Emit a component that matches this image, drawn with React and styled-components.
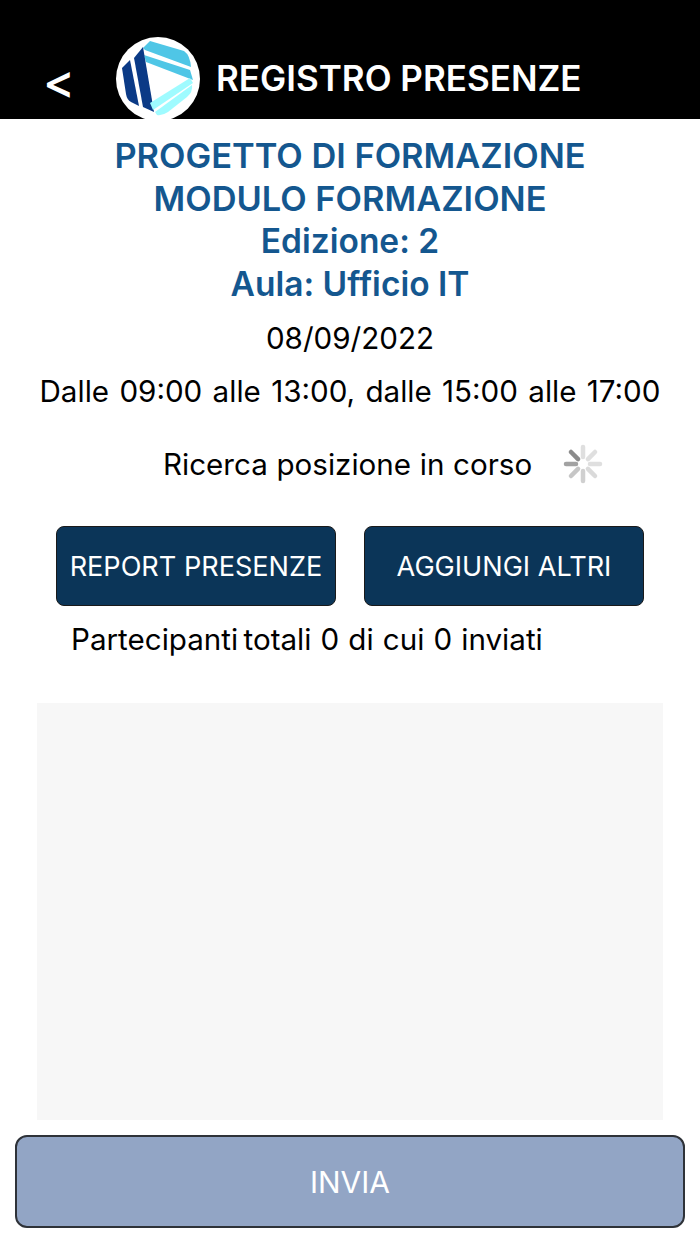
import styled, { createGlobalStyle } from 'styled-components';

const GlobalStyle = createGlobalStyle`
  html, body {
    margin: 0;
    padding: 0;
    background: #fff;
    font-family: Inter, "Liberation Sans", sans-serif;
  }
`;

const Page = styled.div`
  width: 700px;
  height: 1244px;
  display: flex;
  flex-direction: column;
  overflow: hidden;
  background: #fff;
`;

const Header = styled.header`
  height: 119px;
  flex: none;
  display: flex;
  align-items: flex-end;
  background: #000;
  overflow: hidden;
`;

const Back = styled.span`
  width: 116px;
  padding-left: 43px;
  padding-bottom: 14px;
  box-sizing: border-box;
  color: #fff;
  font-size: 48px;
  font-weight: 500;
  line-height: 48px;
`;

const Logo = styled.svg`
  flex: none;
  width: 84px;
  height: 84px;
  margin-bottom: -2px;
`;

const HeaderTitle = styled.h1`
  margin: 0 0 21px 16px;
  color: #fff;
  font-size: 35px;
  font-weight: 600;
  line-height: 40px;
  white-space: nowrap;
`;

const Course = styled.div`
  margin-top: 16px;
  text-align: center;
  color: #14578f;
  font-size: 33.5px;
  font-weight: 600;
  line-height: 42.6px;
`;

const CourseName = styled.div`
  font-size: 34.4px;
`;

const DateLine = styled.div`
  margin-top: 14px;
  text-align: center;
  color: #000;
  font-size: 29.6px;
  line-height: 38px;
`;

const HoursLine = styled(DateLine)`
  margin-top: 15px;
  word-spacing: 2px;
`;

const Locating = styled.div`
  margin-top: 34px;
  padding-left: 163px;
  height: 40px;
  display: flex;
  align-items: center;
  gap: 31px;
  font-size: 29.6px;
  word-spacing: 0.3px;
  color: #000;
`;

const Spinner = styled.svg`
  flex: none;
  width: 40px;
  height: 40px;
`;

const Actions = styled.div`
  margin-top: 42px;
  padding: 0 56px;
  display: flex;
  justify-content: space-between;
`;

const ActionButton = styled.button`
  width: 280px;
  height: 80px;
  padding: 0;
  border: 1px solid #1a1a1a;
  border-radius: 8px;
  background: #0b3558;
  color: #fff;
  font-family: inherit;
  font-size: 27.1px;
  cursor: pointer;
`;

const Summary = styled.div`
  margin-top: 14px;
  padding-left: 71px;
  font-size: 29.6px;
  line-height: 38px;
  word-spacing: 0.8px;
  color: #000;
`;

const TightGap = styled.span`
  word-spacing: -3px;
`;

const ListArea = styled.div`
  margin: 45px 37px 0;
  height: 417px;
  flex: none;
  background: #f7f7f7;
`;

const SendButton = styled.button`
  margin: 15px 15px 0;
  height: 93px;
  flex: none;
  border: 2px solid #2e3238;
  border-radius: 12px;
  background: #92a5c5;
  color: #fff;
  font-family: inherit;
  font-size: 30px;
  cursor: pointer;
`;

const spokes = [
  { angle: 0, opacity: 0.12 },
  { angle: 45, opacity: 0.12 },
  { angle: 90, opacity: 0.12 },
  { angle: 135, opacity: 0.14 },
  { angle: 180, opacity: 0.18 },
  { angle: 225, opacity: 0.22 },
  { angle: 270, opacity: 0.36 },
  { angle: 315, opacity: 0.45 },
];

function App() {
  return (
    <Page>
      <GlobalStyle />
      <Header>
        <Back>&lt;</Back>
        <Logo viewBox="116 37 84 84">
          <circle cx="158" cy="79" r="42" fill="#fff" />
          <path d="M143 48L150 41L184 51Q190 55 191 67L145 50Z" fill="#4fc6e6" />
          <path d="M144 55L190 70L193 80L146 62Z" fill="#4fc6e6" />
          <path d="M122 68L130 60L139 106L131 102Q127 100 126 94Z" fill="#0b3a86" />
          <path d="M134 58L143 47L154 112L143 107Z" fill="#0b3a86" />
          <path d="M150 103L190 78L193 83L153 110Z" fill="#9ffbff" />
          <path d="M155 112L192 85Q193 92 187 97L168 112Q162 116 157 115Z" fill="#9ffbff" />
        </Logo>
        <HeaderTitle>REGISTRO PRESENZE</HeaderTitle>
      </Header>
      <Course>
        <CourseName>PROGETTO DI FORMAZIONE</CourseName>
        <CourseName>MODULO FORMAZIONE</CourseName>
        <div>Edizione: 2</div>
        <div>Aula: Ufficio IT</div>
      </Course>
      <DateLine>08/09/2022</DateLine>
      <HoursLine>Dalle 09:00 alle 13:00, dalle 15:00 alle 17:00</HoursLine>
      <Locating>
        <span>Ricerca posizione in corso</span>
        <Spinner viewBox="-20 -20 40 40">
          {spokes.map(s => (
            <line
              key={s.angle}
              x1="0"
              y1="-7"
              x2="0"
              y2="-17"
              stroke="#000"
              strokeWidth="4.5"
              strokeLinecap="round"
              opacity={s.opacity}
              transform={`rotate(${s.angle})`}
            />
          ))}
        </Spinner>
      </Locating>
      <Actions>
        <ActionButton>REPORT PRESENZE</ActionButton>
        <ActionButton>AGGIUNGI ALTRI</ActionButton>
      </Actions>
      <Summary>
        <TightGap>Partecipanti totali</TightGap> 0 di cui 0 inviati
      </Summary>
      <ListArea />
      <SendButton>INVIA</SendButton>
    </Page>
  );
}

export default App;
